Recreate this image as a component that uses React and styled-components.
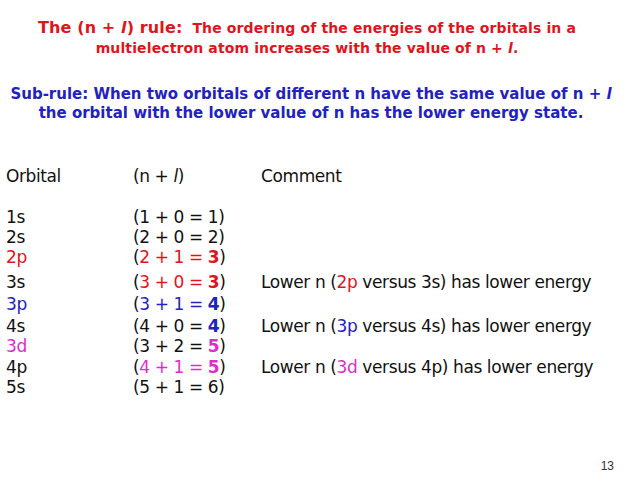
import styled, { createGlobalStyle } from "styled-components";

const GlobalStyle = createGlobalStyle`
  html, body {
    margin: 0;
    padding: 0;
    background: #ffffff;
  }
`;

const RED = "#e0141c";
const BLUE = "#2222c0";
const PINK = "#e02ccc";

const StyledSlide = styled.div`
  position: relative;
  width: 628px;
  height: 480px;
  background: #ffffff;
  font-family: "DejaVu Sans", "Open Sans", sans-serif;
  overflow: hidden;
`;
const StyledTitle = styled.div`
  padding-top: 18px;
  padding-right: 14px;
  text-align: center;
  color: ${RED};
  font-size: 14px;
  font-weight: bold;
  letter-spacing: 0.12px;
  line-height: 20px;
  white-space: nowrap;
`;
const StyledRuleName = styled.span`
  font-size: 16px;
`;
const StyledSubRule = styled.div`
  margin-top: 27px;
  padding-right: 6px;
  text-align: center;
  color: ${BLUE};
  font-size: 15px;
  font-weight: bold;
  line-height: 19px;
  white-space: nowrap;
`;
const StyledTable = styled.div`
  margin-top: 43px;
  padding-left: 6px;
  display: flex;
  flex-direction: column;
  font-size: 17px;
  letter-spacing: -0.4px;
  color: #111111;
`;
const StyledRow = styled.div`
  display: grid;
  grid-template-columns: 127px 128px 1fr;
  height: 20px;
  line-height: 20px;
  margin-top: ${(p) => p.$gap || 0}px;
  white-space: nowrap;
`;
const Colored = styled.span`
  color: ${(p) => p.$color || "inherit"};
  font-weight: ${(p) => (p.$bold ? "bold" : "normal")};
`;
const Ell = styled.i`
  font-style: italic;
`;
const StyledPage = styled.div`
  position: absolute;
  right: 14px;
  bottom: 7px;
  font-family: "Liberation Sans", Arial, sans-serif;
  font-size: 12px;
  color: #333333;
`;

function Sum({ a, b, r, color, sumColor }) {
  return (
    <span>
      (<Colored $color={color}>{a} + {b} = </Colored>
      <Colored $color={sumColor} $bold={!!sumColor}>
        {r}
      </Colored>
      )
    </span>
  );
}

function Comment({ lower, higher, color }) {
  return (
    <span>
      Lower n (<Colored $color={color}>{lower}</Colored> versus {higher}) has
      lower energy
    </span>
  );
}

const rows = [
  { orb: "1s", a: 1, b: 0, r: 1, gap: 0 },
  { orb: "2s", a: 2, b: 0, r: 2, gap: 0 },
  { orb: "2p", orbColor: RED, a: 2, b: 1, r: 3, color: RED, sumColor: RED, gap: 0 },
  { orb: "3s", a: 3, b: 0, r: 3, color: RED, sumColor: RED, gap: 5, comment: ["2p", "3s", RED] },
  { orb: "3p", orbColor: BLUE, a: 3, b: 1, r: 4, color: BLUE, sumColor: BLUE, gap: 2 },
  { orb: "4s", a: 4, b: 0, r: 4, sumColor: BLUE, gap: 2, comment: ["3p", "4s", BLUE] },
  { orb: "3d", orbColor: PINK, a: 3, b: 2, r: 5, sumColor: PINK, gap: 0 },
  { orb: "4p", a: 4, b: 1, r: 5, color: PINK, sumColor: PINK, gap: 1, comment: ["3d", "4p", PINK] },
  { orb: "5s", a: 5, b: 1, r: 6, gap: 0 },
];

export default function App() {
  return (
    <StyledSlide>
      <GlobalStyle />
      <StyledTitle>
        <StyledRuleName>
          The (n + <Ell>l</Ell>) rule:
        </StyledRuleName>
        &nbsp; The ordering of the energies of the orbitals in a
        <br />
        multielectron atom increases with the value of n + <Ell>l</Ell>.
      </StyledTitle>
      <StyledSubRule>
        Sub-rule: When two orbitals of different n have the same value of n + <Ell>l</Ell>
        <br />
        the orbital with the lower value of n has the lower energy state.
      </StyledSubRule>
      <StyledTable>
        <StyledRow>
          <span>Orbital</span>
          <span>
            (n + <Ell>l</Ell>)
          </span>
          <span>Comment</span>
        </StyledRow>
        {rows.map((row, i) => (
          <StyledRow key={row.orb} $gap={i === 0 ? 21 + row.gap : row.gap}>
            <Colored $color={row.orbColor}>{row.orb}</Colored>
            <Sum a={row.a} b={row.b} r={row.r} color={row.color} sumColor={row.sumColor} />
            {row.comment ? (
              <Comment lower={row.comment[0]} higher={row.comment[1]} color={row.comment[2]} />
            ) : (
              <span />
            )}
          </StyledRow>
        ))}
      </StyledTable>
      <StyledPage>13</StyledPage>
    </StyledSlide>
  );
}
